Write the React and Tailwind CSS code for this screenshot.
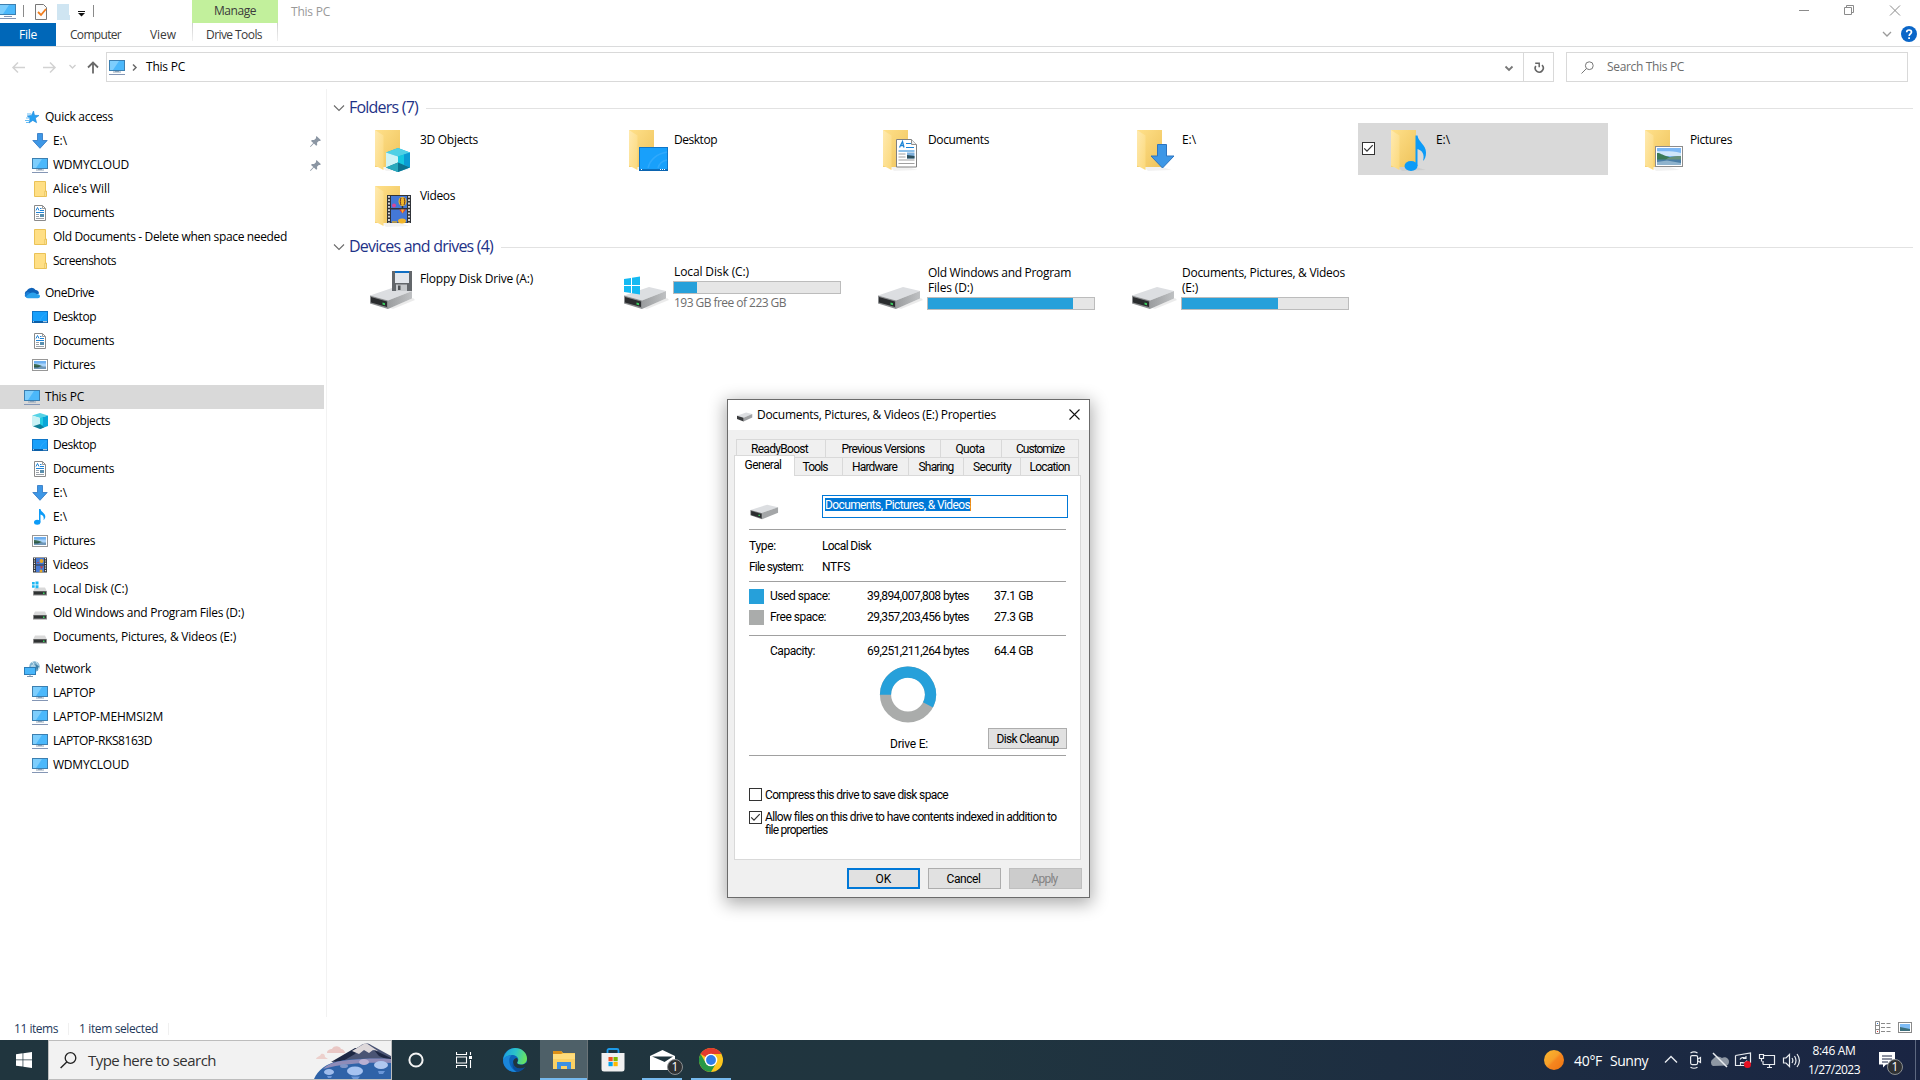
import React, { useLayoutEffect, useRef, useState } from 'react';

// Text run that is tracked so it takes exactly `w` pixels
const Txt = ({ w, className = "", children }) => {
  const ref = useRef(null);
  const [spacing, setSpacing] = useState(0);

  useLayoutEffect(() => {
    if (!w) return;
    const natural = ref.current.getBoundingClientRect().width;
    setSpacing((w - natural) / String(children).length);
  }, []);

  return (
    <span ref={ref} className={`inline-block whitespace-pre ${className}`} style={{ letterSpacing: `${spacing}px` }}>
      {children}
    </span>
  );
};

/* ---------- small icons (16px) ---------- */

const PcIcon = () => (
  <svg width="16" height="16" viewBox="0 0 16 16" className="shrink-0">
    <rect x="0.5" y="1.5" width="15" height="10" fill="#4bb8fb" stroke="#3c7fb0" />
    <path d="M1 2h9L4 11H1z" fill="#7dcefd" />
    <rect x="6" y="12" width="4" height="1" fill="#8fa3b8" />
    <rect x="4" y="12.5" width="8" height="1" fill="#8fa3b8" />
    <rect x="0" y="15" width="16" height="1" fill="#8496b5" />
  </svg>
);

const StarIcon = () => (
  <svg width="16" height="16" viewBox="0 0 16 16" className="shrink-0">
    <path d="M9.5 2l1 4.3 4.5.2-3.6 2.6 1.2 4.6-3.8-2.3L5 14l1-4.4-2.8-2.7 4.2-.5z" fill="#27a0f2" stroke="#1c86d8" strokeWidth="0.6" />
    <path d="M3 5h4M1 11.500h5M2 13.500h3M2 9h4" stroke="#66bdf5" strokeWidth="1" />
  </svg>
);

const DownIcon = () => (
  <svg width="16" height="16" viewBox="0 0 16 16" className="shrink-0">
    <path d="M5.500.5h5v7h4.700L8 15.300.800 7.500h4.700z" fill="#3d97e6" stroke="#2c74c0" strokeWidth="0.8" />
  </svg>
);

const FolderIcon = () => (
  <svg width="16" height="16" viewBox="0 0 16 16" className="shrink-0">
    <path d="M2.500.5h11v9.500h1v5.500h-12z" fill="#ffdf85" stroke="#eac257" />
    <path d="M12.500 15v-4.500h1.500V15" fill="#ffeeb6" stroke="#eac257" strokeWidth="0.7" />
  </svg>
);

const DocIcon = () => (
  <svg width="16" height="16" viewBox="0 0 16 16" className="shrink-0">
    <path d="M2.500.5h8l3 3v12h-11z" fill="#fff" stroke="#8a8a8a" />
    <path d="M10.500.5v3h3" fill="none" stroke="#9a9a9a" />
    <path d="M4 5.500l1.500-3L7 5.500M8 3.500h1.500M8 5.500h4M4 7.500h8" fill="none" stroke="#1f83d6" />
    <path d="M4 9.500h3M4 11.500h3M4 13.500h8" stroke="#9aa1a8" />
    <rect x="8" y="9" width="4" height="3" fill="#5a8fae" />
  </svg>
);

const DesktopIcon = () => (
  <svg width="16" height="16" viewBox="0 0 16 16" className="shrink-0">
    <rect x="0.5" y="2.500" width="15" height="11" fill="#18a0fb" stroke="#0f76c8" />
    <path d="M14.500 4.500C12 5 9 8 8 12" stroke="#2fa9fc" fill="none" />
    <rect x="0" y="12" width="16" height="2" fill="#0b5fa8" />
    <path d="M1 12.700h1M11 12.700h4" stroke="#fff" strokeWidth="0.8" />
  </svg>
);

const PictureIcon = () => (
  <svg width="16" height="16" viewBox="0 0 16 16" className="shrink-0">
    <rect x="0.5" y="2.500" width="15" height="11" fill="#fff" stroke="#979797" />
    <rect x="2" y="4" width="12" height="8" fill="#a9d3fa" />
    <path d="M2 4h12v2.500H2z" fill="#6fb0f0" />
    <path d="M2 7c3 0 6 1 9 2.500L2 10z" fill="#3c6b52" />
    <path d="M2 9.500h12V12H2z" fill="#7097b8" />
    <path d="M2 9h7l-3 1.500H2z" fill="#2f5a4a" />
  </svg>
);

const CubeIcon = () => (
  <svg width="16" height="16" viewBox="0 0 16 16" className="shrink-0">
    <path d="M0 2.500L8 0l8 2.500L8 5z" fill="#56d3e6" />
    <path d="M0 2.500L8 5v11l-8-3z" fill="#c9f2f5" />
    <path d="M8 5l8-2.500V13l-8 3z" fill="#08a6d8" />
    <path d="M8 5l3-1v8l-3 1z" fill="#21cbe2" />
    <path d="M1 13.200L8 11l4 3.500L8 16z" fill="#0f7f98" />
  </svg>
);

const MusicIcon = () => (
  <svg width="16" height="16" viewBox="0 0 16 16" className="shrink-0">
    <ellipse cx="5.200" cy="13.200" rx="3.200" ry="2.500" fill="#0c9bf7" />
    <path d="M7 13V0h1.500c.3 3 4.800 4 4.800 7.500 0 1.700-.8 2.800-1.800 3.500.8-2.600-.2-4.600-3-5.500v7.700z" fill="#0c9bf7" />
  </svg>
);

const VideoIcon = () => (
  <svg width="16" height="16" viewBox="0 0 16 16" className="shrink-0">
    <rect x="1" y="0.500" width="14" height="15" fill="#33363b" />
    <rect x="4" y="1" width="8" height="6.500" fill="#4779d4" />
    <rect x="4" y="8.500" width="8" height="6.500" fill="#4779d4" />
    <path d="M2.500 1v14M13.500 1v14" stroke="#e8e8e8" strokeWidth="1.200" strokeDasharray="1.200 1.200" />
    <circle cx="9.500" cy="4" r="2" fill="#e7a824" />
    <path d="M5 5.500h2M8.500 9.500h2l-1 2z" stroke="#c6413b" fill="#c6413b" strokeWidth="0.7" />
    <circle cx="9" cy="14" r="1.500" fill="#e7a824" />
  </svg>
);

const DiskIcon = ({ win }) => (
  <svg width="16" height="16" viewBox="0 0 16 16" className="shrink-0">
    <path d="M3 6.500h10l2 4H1z" fill="#d9d9d9" />
    <rect x="1" y="10" width="14" height="4.500" fill="#8c8c8c" />
    <rect x="2" y="10.500" width="12" height="3" fill="#2f3233" />
    <rect x="11" y="11.500" width="1.500" height="1.500" fill="#38d860" />
    {win && (
      <>
        <rect x="0" y="0" width="7" height="7" fill="#fff" />
        <path d="M0 1h2.700v2.500H0zM3.500.6H6.500v2.900h-3zM0 4.300h2.700v2.500H0zM3.500 4.300H6.500v2.900h-3z" fill="#1db7f2" />
      </>
    )}
  </svg>
);

const CloudIcon = () => (
  <svg width="16" height="16" viewBox="0 0 16 16" className="shrink-0">
    <path d="M3 12a3.500 3.500 0 010-6.500A5 5 0 0111.500 5 3.800 3.800 0 0115 8.500L8 12z" fill="#0f62b8" />
    <path d="M1 11.500A3.500 3.500 0 014 7l5 2-6 4z" fill="#1a7ed6" />
    <path d="M3.500 13.200A3 3 0 012 11.800c2-2.500 4.500-4.300 7-4.300 2 0 3 1 3.500 1.500 2 0 3.500.8 3.500 2.300 0 1.200-1 1.900-2 1.900z" fill="#2ba2ec" />
  </svg>
);

const NetworkIcon = () => (
  <svg width="16" height="16" viewBox="0 0 16 16" className="shrink-0">
    <circle cx="10.500" cy="5.500" r="5.200" fill="#7fb2cf" />
    <path d="M8 1c2 1 2 2 .5 3.500M12 1c2 2 3.500 5 2 8M7 5h7" stroke="#d5ebf5" fill="none" />
    <path d="M11 3l4 2-2 5z" fill="#3e7ea6" />
    <rect x="0.5" y="6.500" width="11" height="7" fill="#49b6fa" stroke="#2c7bb5" />
    <path d="M3 15.500h6M6 13.500v2" stroke="#7e95ad" />
  </svg>
);

const PinIcon = () => (
  <svg width="11" height="11" viewBox="0 0 11 11" className="shrink-0">
    <path d="M6.500 0L11 4.300 9.800 5 8.800 4.900 7 6.800l.2 2.200-1 .8-2.300-2.200L.6 11 0 10.400l3.300-3.300L1 4.900l.9-1 2.200.2L6 2.200V1z" fill="#8b96a3" />
  </svg>
);

/* ---------- tile icons ---------- */

const BigFolder = ({ children }) => (
  <svg width="48" height="48" viewBox="0 0 48 48" className="shrink-0">
    <defs>
      <linearGradient id="fback" x1="0" y1="0" x2="1" y2="1">
        <stop offset="0" stopColor="#ffe08a" />
        <stop offset="1" stopColor="#eec35b" />
      </linearGradient>
      <linearGradient id="fflap" x1="0" y1="0" x2="1" y2="1">
        <stop offset="0" stopColor="#ffeab0" />
        <stop offset="1" stopColor="#fbd87a" />
      </linearGradient>
    </defs>
    <path d="M12 40l18 0 10 3-24 1z" fill="#000" opacity="0.05" />
    <path d="M5 3h25v37H5z" fill="url(#fback)" />
    <path d="M5 3l8.500 5.500V43L5 38.500z" fill="url(#fflap)" />
    {children}
  </svg>
);

const BigCube = () => (
  <g>
    <path d="M16 25.500l12-4.500 12 4.500v15L28 45l-12-4.500z" fill="#19b3dc" />
    <path d="M16 25.500l12-4.500 12 4.500-12 4z" fill="#4fd0e5" />
    <path d="M16 25.500l12 4V45l-12-4.500z" fill="#cdf3f6" />
    <path d="M28 29.500l6-2v12l-6 2z" fill="#14c7df" />
    <path d="M34 27.500l6-2v15l-6-3z" fill="#0a9bd4" />
    <path d="M16 40.500l12-5 12 5L28 45z" fill="#0c7391" />
    <path d="M16 40.500l12-5V45z" fill="#2aa9bd" />
  </g>
);

const BigDesktop = () => (
  <g>
    <rect x="15.500" y="20.500" width="28" height="23" fill="#18a0fb" stroke="#0f76c8" />
    <path d="M24 41c2-8 9-14 19-16M34 41c1-4 4-7 9-8" stroke="#30a9fc" fill="none" strokeWidth="1.500" />
    <path d="M15 43h29" stroke="#0b5fa8" strokeWidth="1.500" />
    <path d="M17 42.500h1M36 42.500h6" stroke="#fff" strokeDasharray="1 1" />
  </g>
);

const BigDoc = () => (
  <g>
    <path d="M18.500 12.500h15l5 5v22.500h-20z" fill="#fff" stroke="#808080" />
    <path d="M33.500 12.500v5h5" fill="#eee" stroke="#909090" />
    <path d="M21.500 20.500l3-6 1.500 6M23 18.500h3" fill="none" stroke="#1c84d6" strokeWidth="1.300" />
    <path d="M28 16.500h5M28 20.500h8M20.500 24h16" stroke="#1c84d6" strokeWidth="1.200" />
    <path d="M20.500 27h7M20.500 30h7M20.500 33h16M20.500 36.500h16" stroke="#a0a0a0" />
    <rect x="29" y="25.500" width="7.500" height="6" fill="#7fb0dc" />
    <path d="M29 28l7.500 1v2.500H29z" fill="#2c4f5c" />
  </g>
);

const BigDown = () => (
  <path d="M25.500 17.500h9V29h7.500L30.500 41 19 29h6.500z" fill="#3d97e6" stroke="#2c74c0" />
);

const BigMusic = () => (
  <g fill="#0c9bf7">
    <ellipse cx="25" cy="39" rx="6.500" ry="5" />
    <path d="M29.500 39V8.500h2c1 7 8.500 9 8.500 17 0 4-1 6.500-3 8.500 2-7-1-10.500-5.500-12V39z" />
  </g>
);

const BigPicture = () => (
  <g>
    <rect x="15.500" y="19.500" width="27" height="20" fill="#fff" stroke="#8c8c8c" />
    <rect x="17" y="21" width="24" height="17" fill="#7db8f5" />
    <path d="M17 24c6 1 12-1 24 2v3H17z" fill="#cfe6fb" />
    <path d="M17 26c4 0 5 2 9 3s6 2 10 4H17z" fill="#3a7a55" />
    <path d="M28 31c5-2 8-2 13-2v5H24z" fill="#66907c" />
    <path d="M17 32.500h24V38H17z" fill="#4b7ea6" />
    <path d="M17 35l10-1.500 14 2.500v2H17z" fill="#8fb3cd" />
  </g>
);

const BigVideo = () => (
  <g>
    <rect x="17" y="12" width="24" height="28" fill="#303338" />
    <rect x="21" y="13" width="16" height="12" fill="#4478d6" />
    <rect x="21" y="26.500" width="16" height="13" fill="#4478d6" />
    <path d="M19 13v27M39 13v27" stroke="#e4e4e4" strokeWidth="1.800" strokeDasharray="1.800 1.500" />
    <ellipse cx="32.500" cy="18.500" rx="4" ry="4.500" fill="#f0b429" />
    <path d="M31 15c-1 2-1 5 0 7M34 15c1 2 1 5 0 7" stroke="#5a3230" fill="none" />
    <path d="M32.500 23v3" stroke="#303338" strokeWidth="1.500" />
    <circle cx="24" cy="22.500" r="2" fill="#d6479a" />
    <path d="M29 26.500h7l-3.500 4z" fill="#e33b2e" />
    <path d="M31 26.500h3l-1.500 4z" fill="#f0b429" />
    <ellipse cx="32" cy="38" rx="4" ry="2.500" fill="#f0b429" />
    <path d="M22 39h5" stroke="#d6a733" strokeWidth="1.500" />
  </g>
);

const BigDrive = ({ kind }) => (
  <svg width="50" height="48" viewBox="0 0 50 48" className="shrink-0">
    <defs>
      <linearGradient id="dside" x1="0" y1="0" x2="1" y2="0">
        <stop offset="0" stopColor="#9b9d9f" />
        <stop offset="1" stopColor="#bfc1c3" />
      </linearGradient>
    </defs>
    <path d="M22 42l23-10 2 2-22 9z" fill="#000" opacity="0.080" />
    <path d="M2 29.500L27 21l17 4-24 9.500z" fill="#dcdee1" />
    <path d="M20 34.500L44 25v7.500L20 43z" fill="url(#dside)" />
    <path d="M2 29.500l18 5V43L2 37.500z" fill="#8a8c8e" />
    <path d="M3 31l16 4.500v5.500L3 36.500z" fill="#2a2c2e" />
    <path d="M14.500 36.500l2.500.7v2l-2.500-.7z" fill="#3bd15f" />
    {kind === "windows" && (
      <path d="M2 13l7-1v7H2zM10 11.800l8-1.300V19h-8zM2 20h7v7l-7-1zM10 20h8v8.500l-8-1.300z" fill="#14b9f2" />
    )}
    {kind === "floppy" && (
      <g>
        <rect x="24" y="5" width="20" height="20" fill="#63676b" />
        <rect x="27" y="5" width="14" height="2" fill="#0f6fc4" />
        <rect x="27" y="7" width="14" height="10" fill="#e3e7ec" />
        <rect x="28" y="18.500" width="11" height="6.500" fill="#c5c8cb" />
        <rect x="30" y="19.500" width="2.500" height="4.500" fill="#4e5255" />
      </g>
    )}
  </svg>
);

const Chevron = () => (
  <svg width="12" height="8" viewBox="0 0 12 8" className="shrink-0">
    <path d="M1 1.500l5 5 5-5" fill="none" stroke="#6b6b6b" strokeWidth="1.100" />
  </svg>
);

const Check = ({ on }) => (
  <span className="flex h-[13px] w-[13px] shrink-0 items-center justify-center border border-[#333] bg-white">
    {on && (
      <svg width="11" height="11" viewBox="0 0 11 11">
        <path d="M1.200 5.300l2.800 2.900 5.700-6" fill="none" stroke="#333" strokeWidth="1.200" />
      </svg>
    )}
  </span>
);

const sidebar = [
  [
    { icon: StarIcon, text: "Quick access", w: 68, top: true },
    { icon: DownIcon, text: "E:\\", w: 14, pin: true },
    { icon: PcIcon, text: "WDMYCLOUD", w: 76, pin: true },
    { icon: FolderIcon, text: "Alice's Will", w: 57 },
    { icon: DocIcon, text: "Documents", w: 61 },
    { icon: FolderIcon, text: "Old Documents - Delete when space needed", w: 234 },
    { icon: FolderIcon, text: "Screenshots", w: 63 },
  ],
  [
    { icon: CloudIcon, text: "OneDrive", w: 49, top: true },
    { icon: DesktopIcon, text: "Desktop", w: 43 },
    { icon: DocIcon, text: "Documents", w: 61 },
    { icon: PictureIcon, text: "Pictures", w: 42 },
  ],
  [
    { icon: PcIcon, text: "This PC", w: 39, top: true, selected: true },
    { icon: CubeIcon, text: "3D Objects", w: 57 },
    { icon: DesktopIcon, text: "Desktop", w: 43 },
    { icon: DocIcon, text: "Documents", w: 61 },
    { icon: DownIcon, text: "E:\\", w: 14 },
    { icon: MusicIcon, text: "E:\\", w: 14 },
    { icon: PictureIcon, text: "Pictures", w: 42 },
    { icon: VideoIcon, text: "Videos", w: 35 },
    { icon: () => <DiskIcon win />, text: "Local Disk (C:)", w: 75 },
    { icon: DiskIcon, text: "Old Windows and Program Files (D:)", w: 191 },
    { icon: DiskIcon, text: "Documents, Pictures, & Videos (E:)", w: 183 },
  ],
  [
    { icon: NetworkIcon, text: "Network", w: 46, top: true },
    { icon: PcIcon, text: "LAPTOP", w: 42 },
    { icon: PcIcon, text: "LAPTOP-MEHMSI2M", w: 110 },
    { icon: PcIcon, text: "LAPTOP-RKS8163D", w: 99 },
    { icon: PcIcon, text: "WDMYCLOUD", w: 76 },
  ],
];

const folders = [
  { name: "3D Objects", w: 58, art: BigCube },
  { name: "Desktop", w: 43, art: BigDesktop },
  { name: "Documents", w: 61, art: BigDoc },
  { name: "E:\\", w: 14, art: BigDown },
  { name: "E:\\", w: 14, art: BigMusic, selected: true },
  { name: "Pictures", w: 42, art: BigPicture },
  { name: "Videos", w: 35, art: BigVideo },
];

const Sidebar = () => (
  <div className="flex w-[326px] flex-col gap-2 pt-4">
    {sidebar.map((group, i) => (
      <div key={i}>
        {group.map((item, j) => {
          const Icon = item.icon;
          return (
            <div
              key={j}
              className={`flex h-6 w-[324px] items-center ${item.top ? "pl-6" : "pl-8"} ${item.selected ? "bg-[#d9d9d9]" : ""}`}
            >
              <Icon />
              <Txt w={item.w} className="ml-[5px]">{item.text}</Txt>
              {item.pin && (
                <span className="mr-[3px] ml-auto">
                  <PinIcon />
                </span>
              )}
            </div>
          );
        })}
      </div>
    ))}
  </div>
);

const SectionTitle = ({ w, children }) => (
  <div className="mb-[5px] flex h-5 items-center pr-[7px] pl-[6px]">
    <Chevron />
    <Txt w={w} className="-mt-[2px] ml-1 text-base leading-5 text-[#1e3287]">{children}</Txt>
    <div className="ml-2 h-px grow bg-[#e2e2e2]" />
  </div>
);

const Bar = ({ value }) => (
  <div className="h-[13px] w-[168px] border border-[#bcbcbc] bg-[#e6e6e6]">
    <div className="h-full bg-[#26a0da]" style={{ width: `${value}%` }} />
  </div>
);

const Drives = () => (
  <div className="ml-[15px] grid grid-cols-[repeat(6,250px)] gap-1">
    <div className="flex h-[52px] pt-1 pl-[26px]">
      <BigDrive kind="floppy" />
      <div className="ml-[2px] pt-[5px]">
        <Txt w={113} className="leading-4">Floppy Disk Drive (A:)</Txt>
      </div>
    </div>
    <div className="flex h-[52px] pt-1 pl-[26px]">
      <BigDrive kind="windows" />
      <div className="ml-[1px] flex flex-col items-start">
        <Txt w={75} className="-mt-[2px] ml-px leading-4">Local Disk (C:)</Txt>
        <div className="mt-[1px]"><Bar value={14} /></div>
        <Txt w={112} className="mt-[1px] ml-px leading-4 text-[#6d6d6d]">193 GB free of 223 GB</Txt>
      </div>
    </div>
    <div className="flex h-[52px] pt-1 pl-[26px]">
      <BigDrive />
      <div className="ml-[1px] flex flex-col items-start">
        <Txt w={143} className="-mt-px ml-px leading-[15px]">Old Windows and Program</Txt>
        <Txt w={45} className="ml-px leading-[15px]">Files (D:)</Txt>
        <div className="mt-[2px]"><Bar value={87.500} /></div>
      </div>
    </div>
    <div className="flex h-[52px] pt-1 pl-[26px]">
      <BigDrive />
      <div className="ml-[1px] flex flex-col items-start">
        <Txt w={163} className="-mt-px ml-px leading-[15px]">Documents, Pictures, &amp; Videos</Txt>
        <Txt w={16} className="ml-px leading-[15px]">(E:)</Txt>
        <div className="mt-[2px]"><Bar value={57.800} /></div>
      </div>
    </div>
  </div>
);

const Header = () => (
  <>
    <div className="flex h-[46px] shrink-0">
      <div className="w-[192px]">
        <div className="flex h-[23px] items-center">
          <svg width="96" height="23" viewBox="0 0 96 23">
            <rect x="-0.500" y="4.500" width="16" height="10" fill="#4bb8fb" stroke="#3c7fb0" />
            <path d="M0 5h9l-6 9H0z" fill="#7dcefd" />
            <path d="M4 16.500h8M0 18.500h16" stroke="#8496b5" />
            <path d="M23.500 5v12M93.500 5v12" stroke="#8a8a8a" />
            <path d="M35.500 4.500h8l3 3v12h-11z" fill="#fbfbfb" stroke="#777" />
            <path d="M38 12l3 3 5-6" fill="none" stroke="#f07c1c" strokeWidth="1.800" />
            <path d="M57 4h12v11h1v5H57z" fill="#cfe5f2" />
            <path d="M78 11.500h7" stroke="#111" />
            <path d="M78 13h7l-3.500 3.500z" fill="#111" />
          </svg>
        </div>
        <div className="flex h-[23px] items-center text-[#3b3b3b]">
          <div className="flex h-[23px] w-14 items-center justify-center bg-[#0067b8] text-white">
            <Txt w={18}>File</Txt>
          </div>
          <Txt w={51} className="ml-[14px]">Computer</Txt>
          <Txt w={26} className="ml-[29px]">View</Txt>
        </div>
      </div>
      <div className="w-[86px] text-[#3b3b3b]">
        <div className="flex h-[23px] items-center justify-center bg-[#c2f09c] pb-[2px]">
          <Txt w={42}>Manage</Txt>
        </div>
        <div className="flex h-[23px] justify-center">
          <div className="h-[18px] w-px bg-linear-to-b from-[#cfcfcf] to-[#f0f0f0]" />
          <div className="flex h-[23px] grow items-center justify-center pr-[2px]">
            <Txt w={56}>Drive Tools</Txt>
          </div>
          <div className="h-[18px] w-px bg-linear-to-b from-[#cfcfcf] to-[#f0f0f0]" />
        </div>
      </div>
      <Txt w={39} className="mt-1 ml-[13px] leading-4 text-[#999]">This PC</Txt>
      <svg width="130" height="46" viewBox="0 0 130 46" className="ml-auto">
        <path d="M9 10.500h10" stroke="#8b8b8b" />
        <path d="M54.500 7.500h7v7h-7zM56.500 7.500v-2h7v7h-2" fill="none" stroke="#8b8b8b" />
        <path d="M100 5.500l10 10M110 5.500l-10 10" stroke="#8b8b8b" />
        <path d="M93 32l4 4 4-4" fill="none" stroke="#9a9a9a" strokeWidth="1.300" />
        <circle cx="119" cy="34" r="8" fill="#0a66c8" />
        <path d="M116.700 32.300c0-3.100 4.800-3 4.800-.2 0 1.700-2.300 1.700-2.300 3.900M119.100 37.300v1.700" fill="none" stroke="#fff" strokeWidth="1.700" />
      </svg>
    </div>
    <div className="h-px shrink-0 bg-[#dadbdc]" />
    <div className="flex h-[42px] shrink-0 items-start pt-[5px]">
      <svg width="106" height="30" viewBox="0 0 106 30">
        <path d="M25 15.500H13.500M18 10.500l-5 5 5 5" fill="none" stroke="#d2d2d2" strokeWidth="1.500" />
        <path d="M43 15.500h11.500M50 10.500l5 5-5 5" fill="none" stroke="#d2d2d2" strokeWidth="1.500" />
        <path d="M69.500 13l3 3 3-3" fill="none" stroke="#cfcfcf" strokeWidth="1.400" />
        <path d="M93 21.500V10.500M88 15.500l5-5 5 5" fill="none" stroke="#6a6a6a" strokeWidth="1.800" />
      </svg>
      <div className="flex h-[30px] w-[1448px] items-center border border-[#d9d9d9] pl-[2px]">
        <div className="-mt-px"><PcIcon /></div>
        <svg width="6" height="9" viewBox="0 0 6 9" className="ml-[7px]">
          <path d="M1 1.500l3 3-3 3" fill="none" stroke="#6a6a6a" strokeWidth="1.500" />
        </svg>
        <Txt w={39} className="ml-[8px]">This PC</Txt>
        <svg width="10" height="8" viewBox="0 0 10 8" className="mt-[3px] ml-auto">
          <path d="M1.500 1.500L5 5l3.500-3.500" fill="none" stroke="#777" strokeWidth="1.800" />
        </svg>
        <div className="ml-[9px] flex h-[28px] w-[30px] items-center justify-center border-l border-[#d9d9d9]">
          <svg width="12" height="12" viewBox="0 0 12 12" className="mt-[2px]">
            <path d="M9 3.200A4 4 0 112.800 4" fill="none" stroke="#666" strokeWidth="1.600" />
            <path d="M2.200 1.300h4v4" fill="none" stroke="#666" strokeWidth="1.500" />
          </svg>
        </div>
      </div>
      <div className="ml-3 flex h-[30px] w-[342px] items-center border border-[#d9d9d9] pl-[14px] text-[#6d6d6d]">
        <svg width="13" height="13" viewBox="0 0 13 13">
          <circle cx="8.300" cy="4.700" r="3.900" fill="none" stroke="#777" />
          <path d="M5.500 7.500L.5 12.500" stroke="#777" />
        </svg>
        <Txt w={77} className="ml-[13px]">Search This PC</Txt>
      </div>
    </div>
  </>
);

const Tab = ({ className, w, children }) => (
  <div className={`flex h-[18px] shrink-0 items-center justify-center border-t border-r border-[#d9d9d9] bg-[#f0f0f0] ${className}`}>
    <Txt w={w}>{children}</Txt>
  </div>
);

const Rule = ({ className }) => <div className={`h-px w-[317px] bg-[#a0a0a0] ${className}`} />;

const SpaceRow = ({ swatch, label, lw, bytes, gb }) => (
  <div className="flex h-[21px] items-center">
    <div className={`h-[15px] w-[15px] ${swatch}`} />
    <div className="-mt-px ml-[6px] w-[97px]"><Txt w={lw}>{label}</Txt></div>
    <div className="-mt-px w-[127px]"><Txt w={102}>{bytes}</Txt></div>
    <Txt w={39} className="-mt-px">{gb}</Txt>
  </div>
);

const Properties = () => (
  <div className="absolute top-[399px] left-[727px] h-[499px] w-[363px] border border-[#6b6b6b] bg-[#f0f0f0] font-[Roboto,sans-serif] text-[12px] shadow-[0_4px_16px_2px_rgba(0,0,0,0.32)]">
    <div className="flex h-[30px] items-center bg-white pr-[9px] pl-[9px] font-['Open_Sans',sans-serif] text-xs">
      <svg width="16" height="10" viewBox="0 0 44 24" preserveAspectRatio="none" className="mt-[4px]">
        <path d="M0 9L25 1l17 4-24 9z" fill="#dcdee1" />
        <path d="M18 14L42 5v8L18 23z" fill="#9fa1a3" />
        <path d="M0 9l18 5v9L0 17z" fill="#3a3c3e" />
      </svg>
      <Txt w={239} className="ml-1">Documents, Pictures, &amp; Videos (E:) Properties</Txt>
      <svg width="11" height="11" viewBox="0 0 11 11" className="mb-[2px] ml-auto">
        <path d="M.5.5l10 10M10.500.5l-10 10" stroke="#111" strokeWidth="1.100" />
      </svg>
    </div>
    <div className="mt-[9px] ml-2 flex">
      <Tab w={57} className="w-[90px] border-l pr-[3px]">ReadyBoost</Tab>
      <Tab w={83} className="w-[115px]">Previous Versions</Tab>
      <Tab w={29} className="w-[61px] pr-[2px]">Quota</Tab>
      <Tab w={48} className="w-[77px]">Customize</Tab>
    </div>
    <div className="ml-[6px] flex">
      <div className="relative z-10 -mt-[2px] -mb-px flex h-[21px] w-[61px] items-center justify-center border border-b-0 border-[#d9d9d9] bg-white pr-[3px] pb-[2px]">
        <Txt w={37}>General</Txt>
      </div>
      <Tab w={25} className="w-[48px] pr-[7px]">Tools</Tab>
      <Tab w={45} className="w-[66px] pr-[2px]">Hardware</Tab>
      <Tab w={35} className="w-[55px]">Sharing</Tab>
      <Tab w={38} className="w-[57px]">Security</Tab>
      <Tab w={40} className="w-[58px]">Location</Tab>
    </div>
    <div className="ml-[6px] h-[385px] w-[347px] border border-[#d9d9d9] bg-white pl-[14px]">
      <div className="mt-[19px] flex h-[23px]">
        <div className="w-[73px] pt-[9px]">
          <svg width="32" height="16" viewBox="0 0 44 24" preserveAspectRatio="none">
            <path d="M2 9L25 1l15 4-24 9z" fill="#dcdee1" />
            <path d="M18 13L40 5v8L18 23z" fill="#a4a6a8" />
            <path d="M2 9l16 5v9L2 17z" fill="#6d6f71" />
            <path d="M3 10.500l14 4.500v6L3 16.500z" fill="#2a2c2e" />
            <path d="M13 16h2v2h-2z" fill="#3bd15f" />
          </svg>
        </div>
        <div className="h-[23px] w-[246px] border border-[#0078d7] pt-[2px] pl-[2px]">
          <div className="h-[13px] w-[146px] border-r border-[#e8891a] bg-[#0078d7] leading-[14px] text-white">
            <Txt w={145}>Documents, Pictures, &amp; Videos</Txt>
          </div>
        </div>
      </div>
      <Rule className="mt-[11px]" />
      <div className="mt-[5px] flex h-[21px] items-center">
        <div className="w-[73px]"><Txt w={27}>Type:</Txt></div>
        <Txt w={49}>Local Disk</Txt>
      </div>
      <div className="flex h-[21px] items-center">
        <div className="w-[73px]"><Txt w={54}>File system:</Txt></div>
        <Txt w={28}>NTFS</Txt>
      </div>
      <Rule className="mt-[4px]" />
      <div className="mt-[4px]">
        <SpaceRow swatch="bg-[#26a0da]" label="Used space:" lw={60} bytes="39,894,007,808 bytes" gb="37.1 GB" />
        <SpaceRow swatch="bg-[#aaacab]" label="Free space:" lw={56} bytes="29,357,203,456 bytes" gb="27.3 GB" />
      </div>
      <Rule className="mt-[7px]" />
      <div className="mt-[5px]">
        <SpaceRow label="Capacity:" lw={45} bytes="69,251,211,264 bytes" gb="64.4 GB" />
      </div>
      <svg width="58" height="57" viewBox="0 0 58 57" className="mt-[4px] ml-[130px]">
        <circle cx="29" cy="28.500" r="22.500" fill="none" stroke="#aaacab" strokeWidth="11.200" />
        <path d="M6.500 28.800A22.500 22.500 0 1149 38.900" fill="none" stroke="#26a0da" strokeWidth="11.200" />
      </svg>
      <div className="mt-[5px] flex h-[21px]">
        <div className="w-[239px] pt-[9px] pl-[141px] leading-[14px]"><Txt w={38}>Drive E:</Txt></div>
        <button className="flex h-[21px] w-[79px] items-center justify-center border border-[#adadad] bg-[#e1e1e1]">
          <Txt w={62}>Disk Cleanup</Txt>
        </button>
      </div>
      <Rule className="mt-[6px]" />
      <div className="mt-8 flex h-[13px] items-center">
        <Check />
        <Txt w={183} className="ml-[3px]">Compress this drive to save disk space</Txt>
      </div>
      <div className="mt-[10px] flex">
        <Check on />
        <div className="ml-[3px] flex flex-col items-start leading-[13px]">
          <Txt w={291}>Allow files on this drive to have contents indexed in addition to</Txt>
          <Txt w={62}>file properties</Txt>
        </div>
      </div>
    </div>
    <div className="mt-2 flex justify-end gap-2 pr-[7px]">
      <button className="flex h-[21px] w-[73px] items-center justify-center border-2 border-[#0078d7] bg-[#e1e1e1]">
        <Txt w={16}>OK</Txt>
      </button>
      <button className="flex h-[21px] w-[73px] items-center justify-center border border-[#adadad] bg-[#e1e1e1] pr-[2px]">
        <Txt w={34}>Cancel</Txt>
      </button>
      <button className="flex h-[21px] w-[73px] items-center justify-center border border-[#bfbfbf] bg-[#cccccc] pr-[2px] text-[#838383]">
        <Txt w={26}>Apply</Txt>
      </button>
    </div>
  </div>
);

const SearchArt = () => (
  <svg width="77" height="38" viewBox="0 0 77 38" className="ml-auto">
    <path d="M13 12c0-3 3-4 5-4 2-4 8-3 9 0 2 0 4 2 4 4z" fill="#e9c7c4" />
    <path d="M2 18c1-3 4-2 5-5 3-1 4 1 4 3l3 2z" fill="#ecd0cc" />
    <path d="M18 22L46 5c4-3 8-3 11-1l20 11v8H18z" fill="#4a5474" />
    <path d="M17 21l24-14 5 0-5 6-12 7z" fill="#1d2743" />
    <path d="M38 10L48 4c3-2 5-2 7 0l9 6-5-1-4 3-5-3-5 4z" fill="#ded8da" />
    <path d="M60 9l17 8v3l-12-5z" fill="#1d2743" />
    <path d="M0 38C4 29 12 22 26 20c10-2 30-3 51-2v20z" fill="#2f63a8" />
    <path d="M9 28c6-6 14-8 26-9 12-1 26-2 42-1v4c-20-1-48 0-68 6z" fill="#8f8cb8" />
    <ellipse cx="50" cy="21" rx="5" ry="3" fill="#b9b0d2" />
    <ellipse cx="67" cy="24" rx="7" ry="4" fill="#afc8f0" />
    <ellipse cx="41" cy="30" rx="8" ry="4.500" fill="#a6c3f1" />
    <ellipse cx="15" cy="31" rx="5" ry="3" fill="#9fbdec" />
    <ellipse cx="30" cy="25" rx="4" ry="2" fill="#7f95c6" />
    <path d="M37 35.500h9l-2 2.500h-5zM64 30h7l-2 3h-4zM13 35h5l-1 2h-3z" fill="#6b97d8" />
  </svg>
);

const Badge = () => (
  <span className="absolute top-[19px] flex h-4 w-4 items-center justify-center rounded-full border border-[#8b8f92] bg-[#2f3133] text-xs leading-none text-white">
    1
  </span>
);

const Taskbar = () => (
  <div className="flex h-10 shrink-0 bg-linear-to-r from-[#20353e] via-[#20353f] to-[#1a2543] text-white">
    <div className="flex w-12 items-center justify-center">
      <svg width="16" height="16" viewBox="0 0 16 16" fill="#fff">
        <path d="M0 2.200l6.600-.9v6.300H0zM7.300 1.200L16 0v7.600H7.300zM0 8.300h6.600v6.300L0 13.700zM7.300 8.300H16V16l-8.700-1.200z" />
      </svg>
    </div>
    <div className="flex h-10 w-[344px] items-center border border-[#bdbdbd] bg-[#f2f2f2] pl-[11px] text-[#333]">
      <svg width="17" height="17" viewBox="0 0 17 17">
        <circle cx="10.500" cy="6" r="5.300" fill="none" stroke="#222" strokeWidth="1.300" />
        <path d="M6.800 10L.6 16" stroke="#222" strokeWidth="1.400" />
      </svg>
      <Txt w={128} className="ml-[11px] text-[15px]">Type here to search</Txt>
      <SearchArt />
    </div>
    <div className="flex w-12 items-center justify-center">
      <svg width="16" height="16" viewBox="0 0 16 16">
        <circle cx="8" cy="8" r="6.600" fill="none" stroke="#f3f3f3" strokeWidth="2" />
      </svg>
    </div>
    <div className="flex w-12 items-center justify-center">
      <svg width="17" height="16" viewBox="0 0 17 16" fill="none" stroke="#fff" strokeWidth="1.100">
        <path d="M.5 0v2.500h10V0M.5 16v-2.500h10V16M.5 5h10v6H.5zM14.500 0v3M14.500 8v8" />
        <path d="M13 4h3v3h-3z" fill="#fff" stroke="none" />
      </svg>
    </div>
    <div className="flex w-[52px] items-center justify-center pl-[2px]">
      <svg width="24" height="24" viewBox="0 0 24 24">
        <defs>
          <linearGradient id="edgeTop" x1="0" y1="0.300" x2="1" y2="0.500">
            <stop offset="0" stopColor="#1c9fe0" />
            <stop offset="0.500" stopColor="#2cc3c9" />
            <stop offset="1" stopColor="#6be45c" />
          </linearGradient>
        </defs>
        <circle cx="12" cy="12" r="12" fill="#0c63b8" />
        <path d="M0 12C1 5 6 0 12 0c7 0 12 5 12 10.500 0 4-3 6-6 6-2.500 0-4.500-1-3.500-2.500C17 10 13 7 9 7c-4 0-8 2.500-9 5z" fill="url(#edgeTop)" />
        <path d="M0 12c1-3 5-4.800 8.500-4.800C6 9.500 6 12 6.500 15c.8 4 4 7.500 7.500 8.800C6 25 0 19 0 12z" fill="#1a86da" />
        <path d="M14.300 14c-1 1.600 1 2.700 3.700 2.700 2 0 3.800-.7 4.800-1.800l1.200-.4-.5 8.500-3.500-2.500c-5 1.500-10-1-10-6 0-2.500 1.500-4 3.500-4.500 1.500.8 1.700 2.500.8 4z" fill="#20353e" />
        <path d="M14 23.800c3.500-.5 6.500-2.300 8.300-4.800-4.500 2.500-12 1.500-12-5-1.500 3-1 7 3.700 9.800z" fill="#0b4d98" />
      </svg>
    </div>
    <div className="flex w-12 flex-col items-center border-r border-[#6b7478] bg-[#4e6068]">
      <svg width="22" height="18" viewBox="0 0 22 18" className="mt-[11px] mb-[9px]">
        <path d="M0 0h8l2 2h12v16H0z" fill="#fbd063" />
        <path d="M0 0h8l2 2-2 1H0z" fill="#dd8f16" />
        <path d="M0 3h22v5H0z" fill="#ffdc7c" />
        <path d="M4 18v-7h14v7h-4v-3H8v3z" fill="#3b8fe2" />
      </svg>
      <div className="h-[2px] w-full bg-[#76b9ed]" />
    </div>
    <div className="flex w-[50px] items-center justify-center">
      <svg width="24" height="24" viewBox="0 0 24 24">
        <path d="M6.500 5V2.500a1.500 1.500 0 011.500-1.500h8a1.500 1.500 0 011.500 1.500V5" fill="none" stroke="#1d9bea" strokeWidth="1.800" />
        <path d="M.5 5h23v16a2.500 2.500 0 01-2.500 2.500H3A2.500 2.500 0 01.5 21z" fill="#f1f1f1" />
        <rect x="7.500" y="9" width="4.200" height="4.200" fill="#f25022" />
        <rect x="12.500" y="9" width="4.200" height="4.200" fill="#7fba00" />
        <rect x="7.500" y="14" width="4.200" height="4.200" fill="#00a4ef" />
        <rect x="12.500" y="14" width="4.200" height="4.200" fill="#ffb900" />
      </svg>
    </div>
    <div className="relative ml-1 flex w-10 flex-col">
      <svg width="26" height="20" viewBox="0 0 26 20" className="mt-[10px] ml-2 mb-2">
        <path d="M0 6l12.500-6L25 6v14H0z" fill="#fff" />
        <path d="M2 6.500h21l-8.500 5.500-2-1z" fill="#20353e" />
        <path d="M1.500 7l13 6-1.500 1z" fill="#fff" />
      </svg>
      <div className="h-[2px] w-full bg-[#76b9ed]" />
      <div className="absolute left-[25px] top-0"><Badge /></div>
    </div>
    <div className="ml-[9px] flex w-10 flex-col items-center">
      <svg width="24" height="24" viewBox="0 0 24 24" className="mt-2 mb-[6px]">
        <circle cx="12" cy="12" r="12" fill="#fcc61e" />
        <path d="M1.600 6A12 12 0 0122.400 6H12a6 6 0 00-5.200 3z" fill="#e33b2e" />
        <path d="M1.600 6A12 12 0 0012 24l5.200-9a6 6 0 01-10.400 0z" fill="#279847" />
        <circle cx="12" cy="12" r="6.300" fill="#fff" />
        <circle cx="12" cy="12" r="4.900" fill="#2f7de8" />
      </svg>
      <div className="h-[2px] w-full bg-[#76b9ed]" />
    </div>
    <div className="ml-auto flex items-center">
      <svg width="20" height="20" viewBox="0 0 20 20">
        <defs>
          <linearGradient id="sun" x1="0" y1="0" x2="1" y2="1">
            <stop offset="0" stopColor="#fbb62d" />
            <stop offset="0.450" stopColor="#f6a02a" />
            <stop offset="0.550" stopColor="#f5861f" />
            <stop offset="1" stopColor="#ee7410" />
          </linearGradient>
        </defs>
        <circle cx="10" cy="10" r="10" fill="url(#sun)" />
      </svg>
      <Txt w={28} className="mt-px ml-[10px] text-[14px]">40°F</Txt>
      <Txt w={38} className="mt-px ml-2 text-[14px]">Sunny</Txt>
      <svg width="140" height="40" viewBox="0 0 140 40" className="ml-[14px]" fill="none" stroke="#e9ecf0" strokeWidth="1.200">
        <path d="M3 22.500l6-6 6 6" strokeWidth="1.400" />
        <rect x="28.600" y="15.600" width="7" height="9" rx="1.500" />
        <path d="M36 19l2.500-1.500v5L36 21M28.500 13c2-1.200 5-1.200 7 0M28.500 27.200c2 1.200 5 1.200 7 0" />
        <path d="M51 26a4 4 0 010-7 6 6 0 019-1 4.500 4.500 0 015 7.500z" fill="#8e97a3" stroke="none" />
        <path d="M51 13l14 14" strokeWidth="1.500" />
        <path d="M73.500 15.500l15-2.500v10M73.500 15.500v10h9" />
        <path d="M78 19.500a4 3 0 016-1.500M84 16v2.500h-3M85 20.500a4 3 0 01-6 2M78.500 25v-2.500h3" strokeWidth="1.100" />
        <circle cx="85.500" cy="24.500" r="3.500" fill="#e81123" stroke="none" />
        <path d="M101 15.500h11.500v9H101M101 24.500v-3.500M105 27.500h5M107.500 24.500v3" />
        <path d="M97.500 14.500h4v4h-4zM99.500 18.500v3" />
        <path d="M121.500 18h2.500l3.500-3.500v12L124 23h-2.500zM130 18c1 1.500 1 3.500 0 5M132.500 16c2 3 2 6 0 9M135 14c3 4 3 9 0 13" />
      </svg>
      <div className="ml-[6px] flex w-[52px] flex-col items-center">
        <Txt w={43} className="leading-[19px]">8:46 AM</Txt>
        <Txt w={52} className="leading-[19px]">1/27/2023</Txt>
      </div>
      <div className="relative h-10 w-[60px] pt-3 pl-[19px]">
        <svg width="16" height="16" viewBox="0 0 16 16">
          <path d="M0 0h16v12.500H7l-3 3v-3H0z" fill="#fff" />
          <path d="M3 4h10M3 7h10M3 10h6" stroke="#1a2543" />
        </svg>
        <div className="absolute top-0 left-[27px]"><Badge /></div>
        <div className="absolute top-0 right-1 h-10 w-px bg-[#5d6880]" />
      </div>
    </div>
  </div>
);

const App = () => {
  return (
    <div className="relative flex h-[1080px] w-[1920px] flex-col overflow-hidden bg-white font-['Open_Sans',sans-serif] text-xs leading-4 text-black">
      <Header />
      <div className="flex h-[928px] shrink-0">
        <Sidebar />
        <div className="h-full w-px bg-[#f2f2f2]" />
        <div className="grow pt-[9px]">
          <SectionTitle w={69}>Folders (7)</SectionTitle>
          <div className="mb-[6px] ml-[15px] grid grid-cols-[repeat(6,250px)] gap-1">
            {folders.map((folder, i) => {
              const Art = folder.art;
              return (
                <div key={i} className={`flex h-[52px] pt-1 ${folder.selected ? "bg-[#d9d9d9]" : ""}`}>
                  <div className="w-7 pt-[15px] pl-1">{folder.selected && <Check on />}</div>
                  <BigFolder>
                    <Art />
                  </BigFolder>
                  <Txt w={folder.w} className="mt-[5px] ml-[2px] leading-4">{folder.name}</Txt>
                </div>
              );
            })}
          </div>
          <SectionTitle w={144}>Devices and drives (4)</SectionTitle>
          <Drives />
        </div>
      </div>
      <div className="flex h-[23px] shrink-0 items-center pl-[14px] text-[#1e395b]">
        <Txt w={44}>11 items</Txt>
        <div className="ml-[10px] h-3 w-px bg-[#f0f0f0]" />
        <Txt w={79} className="ml-[10px]">1 item selected</Txt>
        <div className="ml-[10px] h-3 w-px bg-[#f0f0f0]" />
        <svg width="40" height="14" viewBox="0 0 40 14" className="-mt-[2px] mr-[6px] ml-auto">
          <path d="M1.500.5h4v12h-4zM1.500 4.500h4M1.500 8.500h4" fill="none" stroke="#8a8a8a" />
          <path d="M7 2.500h4M12.500 2.500h4M7 6.500h4M12.500 6.500h4M7 10.500h4M12.500 10.500h4" stroke="#8a8a8a" />
          <path d="M3 2.500h1" stroke="#3273c9" />
          <path d="M3 10.500h1" stroke="#d33" />
          <rect x="24.500" y="1.500" width="13" height="10" fill="#fff" stroke="#8a8a8a" />
          <path d="M26 3h10v7H26z" fill="#7fbcf5" />
          <path d="M26 6l10 2v2H26z" fill="#3d6f7c" />
        </svg>
      </div>
      <Taskbar />
      <Properties />
    </div>
  );
};

export default App;
